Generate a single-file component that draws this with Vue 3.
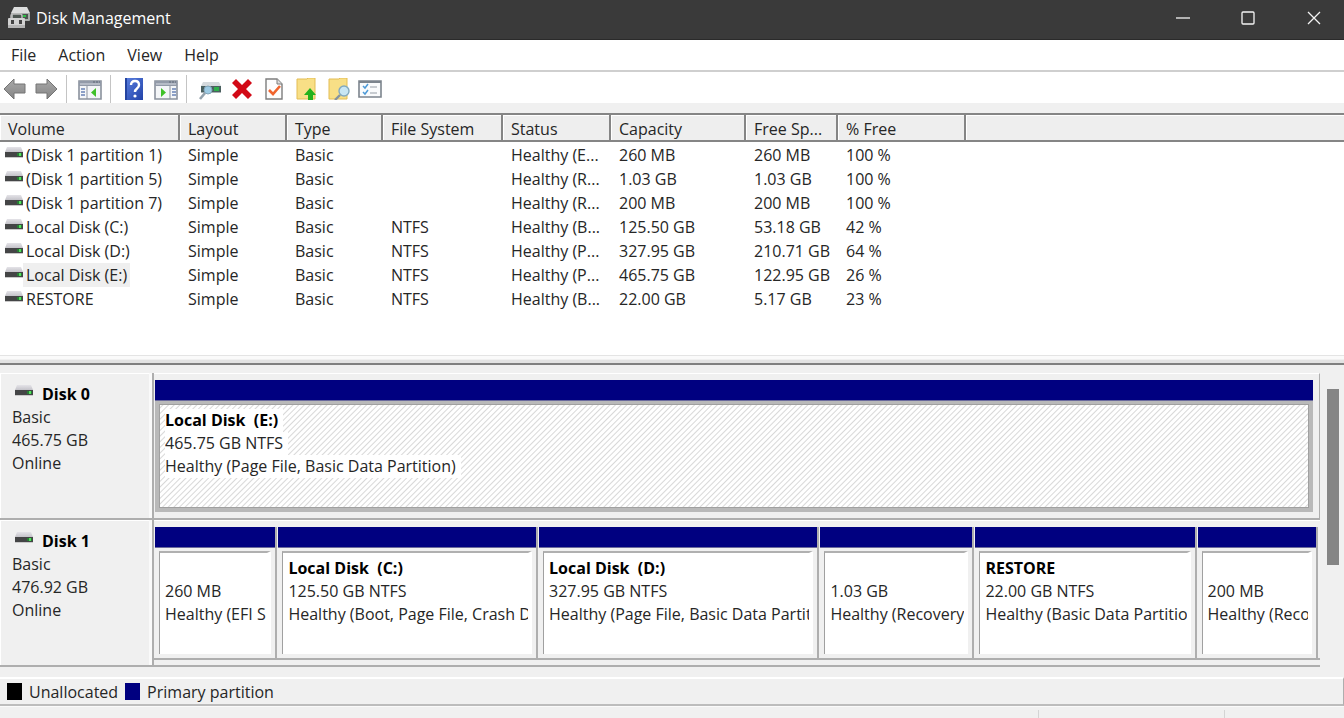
<script setup>
import { ref } from 'vue'

const menus = ['File', 'Action', 'View', 'Help']

const columns = [
  { key: 'name', label: 'Volume', width: 180 },
  { key: 'layout', label: 'Layout', width: 107 },
  { key: 'type', label: 'Type', width: 96 },
  { key: 'fs', label: 'File System', width: 120 },
  { key: 'status', label: 'Status', width: 108 },
  { key: 'capacity', label: 'Capacity', width: 135 },
  { key: 'free', label: 'Free Sp...', width: 92 },
  { key: 'percent', label: '% Free', width: 128 }
]

const volumes = [
  { name: '(Disk 1 partition 1)', fs: '', status: 'Healthy (E...', capacity: '260 MB', free: '260 MB', percent: '100 %' },
  { name: '(Disk 1 partition 5)', fs: '', status: 'Healthy (R...', capacity: '1.03 GB', free: '1.03 GB', percent: '100 %' },
  { name: '(Disk 1 partition 7)', fs: '', status: 'Healthy (R...', capacity: '200 MB', free: '200 MB', percent: '100 %' },
  { name: 'Local Disk (C:)', fs: 'NTFS', status: 'Healthy (B...', capacity: '125.50 GB', free: '53.18 GB', percent: '42 %' },
  { name: 'Local Disk (D:)', fs: 'NTFS', status: 'Healthy (P...', capacity: '327.95 GB', free: '210.71 GB', percent: '64 %' },
  { name: 'Local Disk (E:)', fs: 'NTFS', status: 'Healthy (P...', capacity: '465.75 GB', free: '122.95 GB', percent: '26 %' },
  { name: 'RESTORE', fs: 'NTFS', status: 'Healthy (B...', capacity: '22.00 GB', free: '5.17 GB', percent: '23 %' }
].map((v) => ({ layout: 'Simple', type: 'Basic', ...v }))

const selected = ref('Local Disk (E:)')

// weight: relative width of the partition in the graph
const disks = [
  {
    name: 'Disk 0',
    size: '465.75 GB',
    parts: [
      { id: 'e', label: 'Local Disk  (E:)', size: '465.75 GB NTFS', status: 'Healthy (Page File, Basic Data Partition)', weight: 1, active: true }
    ]
  },
  {
    name: 'Disk 1',
    size: '476.92 GB',
    parts: [
      { id: 'p1', label: '', size: '260 MB', status: 'Healthy (EFI S', weight: 122 },
      { id: 'c', label: 'Local Disk  (C:)', size: '125.50 GB NTFS', status: 'Healthy (Boot, Page File, Crash D', weight: 261 },
      { id: 'd', label: 'Local Disk  (D:)', size: '327.95 GB NTFS', status: 'Healthy (Page File, Basic Data Partit', weight: 282 },
      { id: 'p5', label: '', size: '1.03 GB', status: 'Healthy (Recovery', weight: 154 },
      { id: 'r', label: 'RESTORE', size: '22.00 GB NTFS', status: 'Healthy (Basic Data Partitio', weight: 222 },
      { id: 'p7', label: '', size: '200 MB', status: 'Healthy (Reco', weight: 120 }
    ]
  }
]
</script>

<template>
  <div class="window">
    <svg class="defs" aria-hidden="true">
      <defs>
        <linearGradient id="metal" x1="0" y1="0" x2="0" y2="1">
          <stop offset="0" stop-color="#e4e3e8" />
          <stop offset="1" stop-color="#c4c3c9" />
        </linearGradient>
        <linearGradient id="arrow" x1="0" y1="0" x2="0" y2="1">
          <stop offset="0" stop-color="#a9a9a9" />
          <stop offset="1" stop-color="#858585" />
        </linearGradient>
        <linearGradient id="book" x1="0" y1="0" x2="1" y2="1">
          <stop offset="0" stop-color="#5b80e0" />
          <stop offset="1" stop-color="#2142a8" />
        </linearGradient>
        <symbol id="drive" viewBox="0 0 18 12">
          <path d="M2 0h14l2 5H0z" fill="url(#metal)" />
          <path d="M0 5h18v5H0z" fill="#444546" />
          <path d="M0 10h18v1H0z" fill="#c9c9c9" />
          <path d="M12 6h5v3h-5z" fill="#287a35" />
          <path d="M14 6h2v3h-2z" fill="#52e05b" />
        </symbol>
        <symbol id="pane" viewBox="0 0 24 20">
          <path d="M1 1h22v18H1z" fill="#f4f6f8" stroke="#8b929d" stroke-width="1.6" />
          <path d="M1 1h22v5H1z" fill="#929aa8" />
          <path d="M2 4h20" stroke="#c5cad3" stroke-width="1.4" />
          <path d="M15 2h2M18 2h2M21 2h1" stroke="#5d6675" stroke-width="1.2" />
        </symbol>
      </defs>
    </svg>

    <header class="titlebar">
      <svg class="app-icon" viewBox="0 0 24 22" aria-hidden="true">
        <path d="M7 0h13l3 6H4z" fill="#dcdddd" />
        <path d="M4 6h19v7q0 1-1 1H4z" fill="#a9adab" />
        <path d="M6 7h15v5H6z" fill="#4c5550" />
        <path d="M16 8h3v2h-3z" fill="#2fc047" />
        <path d="M4 11V9q0-2 2-2h7q2 0 2 2v2" fill="none" stroke="#bdbdbd" stroke-width="1.500" />
        <rect x="1" y="11" width="17" height="10" rx="1" fill="#d2d2d2" />
        <path d="M1 18h17v2q0 1-1 1H2q-1 0-1-1z" fill="#b4b4b4" />
        <path d="M4 13h3v4H4zM12 13h3v4h-3z" fill="#444" />
      </svg>
      <h1>Disk Management</h1>
      <div class="window-buttons">
        <button type="button" aria-label="Minimize">
          <svg viewBox="0 0 16 16"><path d="M1 8h14" /></svg>
        </button>
        <button type="button" aria-label="Maximize">
          <svg viewBox="0 0 16 16"><rect x="2" y="2" width="12" height="12" rx="1" /></svg>
        </button>
        <button type="button" aria-label="Close">
          <svg viewBox="0 0 16 16"><path d="M2 2l12 12M14 2L2 14" /></svg>
        </button>
      </div>
    </header>

    <nav class="menubar">
      <button v-for="m in menus" :key="m" type="button">{{ m }}</button>
    </nav>

    <div class="toolbar" role="toolbar">
      <button type="button" aria-label="Back">
        <svg viewBox="0 0 24 22"><path d="M2 11L12 1v5h11v9H12v6z" fill="url(#arrow)" stroke="#747474" /></svg>
      </button>
      <button type="button" aria-label="Forward">
        <svg viewBox="0 0 24 22"><path d="M23 11L13 1v5H2v9h11v6z" fill="url(#arrow)" stroke="#747474" /></svg>
      </button>
      <span class="divider"></span>
      <button type="button" class="wide" aria-label="Show or hide console tree">
        <svg viewBox="0 0 24 22">
          <use href="#pane" y="2" width="24" height="20" />
          <path d="M9 8v13" stroke="#8b929d" />
          <path d="M3 11h4M3 14h4M3 17h4" stroke="#6882b5" stroke-width="1.4" />
          <path d="M18 10v9l-5-4.500z" fill="#3fc129" />
        </svg>
      </button>
      <span class="divider"></span>
      <button type="button" class="wide" aria-label="Help">
        <svg viewBox="0 0 24 22">
          <path d="M3 0h18v22H3z" fill="url(#book)" />
          <path d="M3 0h2v22H3z" fill="#2444a0" />
          <path d="M9 7q0-4 4-4t4 4q0 2-2 3.500T13 14" fill="none" stroke="#fff" stroke-width="2.400" />
          <circle cx="13" cy="18" r="1.600" fill="#fff" />
        </svg>
      </button>
      <button type="button" aria-label="Show or hide action pane">
        <svg viewBox="0 0 24 22">
          <use href="#pane" y="2" width="24" height="20" />
          <path d="M16 8v13" stroke="#8b929d" />
          <path d="M18 11h4M18 14h4M18 17h4" stroke="#6882b5" stroke-width="1.4" />
          <path d="M7 10v9l5-4.500z" fill="#3fc129" />
        </svg>
      </button>
      <span class="divider"></span>
      <button type="button" class="wide" aria-label="Connect drive">
        <svg viewBox="0 0 24 22">
          <path d="M5 4h16l2 4H3z" fill="#d5dadd" />
          <path d="M3 8h20v6H3z" fill="#4a605f" />
          <path d="M16 9h5v4h-5z" fill="#2eae4b" />
          <path d="M3 14h20v1H3z" fill="#a9b1b4" />
          <circle cx="10" cy="12" r="4" fill="#9dcbe4" stroke="#82a4b8" />
          <path d="M7 15l-5 6" stroke="#94a2ac" stroke-width="2.600" />
        </svg>
      </button>
      <button type="button" aria-label="Delete">
        <svg viewBox="0 0 24 22"><path d="M2 5l4-4 6 6 6-6 4 4-6 6 6 6-4 4-6-6-6 6-4-4 6-6z" fill="#d20a17" /></svg>
      </button>
      <button type="button" aria-label="Properties">
        <svg viewBox="0 0 24 22">
          <path d="M4 1h11l5 5v15H4z" fill="#fdfdfd" stroke="#7d7d7d" stroke-width="1.400" />
          <path d="M15 1v5h5" fill="#ddd" stroke="#7d7d7d" />
          <path d="M7 12l4 4 7-8" fill="none" stroke="#f0642d" stroke-width="2.600" />
        </svg>
      </button>
      <button type="button" aria-label="Up one level">
        <svg viewBox="0 0 24 22">
          <path d="M3 1h10l1-1h7v21H3z" fill="#f8df86" stroke="#e3bd55" />
          <path d="M16 10l6 7h-3v5h-5v-5h-4z" fill="#25b21c" />
        </svg>
      </button>
      <button type="button" aria-label="Find">
        <svg viewBox="0 0 24 22">
          <path d="M3 1h10l1-1h7v21H3z" fill="#f8df86" stroke="#e3bd55" />
          <circle cx="18" cy="13" r="5" fill="#c8e6f4" stroke="#82a9bf" stroke-width="1.400" />
          <path d="M14 17l-5 5" stroke="#8493a0" stroke-width="2.400" />
        </svg>
      </button>
      <button type="button" aria-label="Options">
        <svg viewBox="0 0 24 22">
          <path d="M1 3h22v16H1z" fill="#fafbfc" stroke="#7c848d" stroke-width="1.600" />
          <path d="M1 4h22" stroke="#7c848d" stroke-width="2" />
          <path d="M5 8l2 2 3-4M5 14l2 2 3-4" fill="none" stroke="#4d9ad7" stroke-width="1.500" />
          <path d="M12 9h7M12 15h7" stroke="#b8bdc2" stroke-width="1.400" />
        </svg>
      </button>
    </div>

    <section class="volume-list">
      <table>
        <colgroup>
          <col v-for="c in columns" :key="c.key" :style="{ width: c.width + 'px' }" />
          <col />
        </colgroup>
        <thead>
          <tr>
            <th v-for="c in columns" :key="c.key" scope="col">{{ c.label }}</th>
            <th></th>
          </tr>
        </thead>
        <tbody>
          <tr v-for="v in volumes" :key="v.name" @click="selected = v.name">
            <td v-for="c in columns" :key="c.key" :class="c.key">
              <template v-if="c.key === 'name'">
                <svg class="drive"><use href="#drive" /></svg>
                <span class="volume-name" :class="{ selected: v.name === selected }">{{ v.name }}</span>
              </template>
              <template v-else>{{ v[c.key] }}</template>
            </td>
            <td></td>
          </tr>
        </tbody>
      </table>
    </section>

    <div class="splitter"></div>

    <section class="graph">
      <div class="disks">
        <div v-for="d in disks" :key="d.name" class="disk">
          <div class="disk-info">
            <h2><svg class="drive"><use href="#drive" /></svg>{{ d.name }}</h2>
            <p>Basic</p>
            <p>{{ d.size }}</p>
            <p>Online</p>
          </div>
          <div class="partitions" :class="{ single: d.parts.length === 1 }">
            <div
              v-for="p in d.parts"
              :key="p.id"
              class="partition"
              :class="{ active: p.active }"
              :style="{ flexGrow: p.weight }"
            >
              <div class="stripe"></div>
              <div class="frame">
                <div class="body">
                  <p class="label"><span>{{ p.label }}</span></p>
                  <p><span>{{ p.size }}</span></p>
                  <p><span>{{ p.status }}</span></p>
                </div>
              </div>
            </div>
          </div>
        </div>
      </div>
      <div class="scrollbar"><div class="thumb"></div></div>
    </section>

    <div class="legend">
      <span class="swatch black"></span><span>Unallocated</span>
      <span class="swatch navy"></span><span>Primary partition</span>
    </div>

    <footer class="statusbar">
      <span></span>
      <span></span>
      <span></span>
    </footer>
  </div>
</template>

<style>
body {
  margin: 0;
  background: #f0f0f0;
}
</style>

<style scoped>
* {
  box-sizing: border-box;
}

.window {
  display: flex;
  flex-direction: column;
  min-height: 100vh;
  background: #f0f0f0;
  color: #262626;
  font-family: "Open Sans", "Noto Sans", sans-serif;
  font-size: 16px;
  line-height: 24px;
}

.defs {
  position: absolute;
  width: 0;
  height: 0;
}

button {
  border: none;
  background: none;
  padding: 0;
  color: inherit;
  font: inherit;
}

h1,
h2,
p {
  margin: 0;
}

/* title bar */
.titlebar {
  display: flex;
  align-items: center;
  height: 40px;
  padding: 0 0 4px 7px;
  background: #3a3a3a;
  border-bottom: 1px solid #2a2a2a;
  color: #fff;
}

.app-icon {
  width: 24px;
  height: 22px;
}

h1 {
  flex: 1;
  margin-left: 5px;
  font-size: 16px;
  font-weight: 400;
}

.window-buttons {
  display: flex;
}

.window-buttons button {
  display: flex;
  align-items: center;
  justify-content: center;
  width: 65px;
  height: 36px;
}

.window-buttons button:last-child {
  width: 61px;
  margin-left: 3px;
}

.window-buttons svg {
  width: 16px;
  height: 16px;
  fill: none;
  stroke: #f4f4f4;
  stroke-width: 1.3;
}

/* menu and toolbar */
.menubar {
  display: flex;
  gap: 22px;
  padding: 3px 11px;
  background: #fff;
  border-bottom: 2px solid #cfcfcf;
}

.toolbar {
  display: flex;
  align-items: center;
  gap: 8px;
  height: 31px;
  padding: 2px 2px 0;
  background: #fff;
}

.toolbar svg {
  display: block;
  width: 24px;
  height: 22px;
}

.toolbar .wide {
  margin-left: 3px;
}

.divider {
  width: 1px;
  height: 28px;
  background: #c4c4c4;
}

/* volume list */
.volume-list {
  margin-top: 10px;
  padding-bottom: 44px;
  background: #fff;
  border-top: 2px solid #858585;
}

table {
  width: 100%;
  table-layout: fixed;
  border-collapse: separate;
  border-spacing: 0;
}

th {
  height: 27px;
  padding: 3px 0 0 8px;
  border-right: 2px solid #858585;
  border-bottom: 2px solid #858585;
  background: #eee;
  box-shadow: inset 1px 1px #fff;
  font-weight: 400;
  line-height: 22px;
  text-align: left;
  white-space: nowrap;
}

th:last-child {
  border-right: none;
}

td {
  height: 24px;
  padding: 0 0 0 8px;
  white-space: nowrap;
}

tbody tr:first-child td {
  height: 25px;
  padding-top: 1px;
}

td.name {
  padding-left: 5px;
}

.drive {
  width: 18px;
  height: 12px;
}

td .drive {
  margin-bottom: 2px;
}

.volume-name {
  display: inline-block;
  padding: 0 3px;
}

.volume-name.selected {
  background: #efefef;
}

.splitter {
  height: 10px;
  border-top: 1px solid #e4e4e4;
  border-bottom: 2px solid #808080;
  box-shadow: inset 0 -3px #e3e3e3, inset 0 3px #fafafa;
}

/* graphical view */
.graph {
  display: flex;
  padding-top: 8px;
}

.disks {
  flex: 1;
  min-width: 0;
}

.disk {
  display: flex;
  border-bottom: 2px solid #aeaeae;
  height: 147px;
}

.disk-info {
  width: 154px;
  padding: 10px 0 0 11px;
  border-left: 1px solid #fff;
  border-right: 2px solid #aeaeae;
  box-shadow: inset -3px 0 #fafafa, inset 0 1px #fff;
  line-height: 23px;
}

.disk-info h2 {
  display: flex;
  gap: 9px;
  padding-left: 3px;
  color: #000;
  font-size: 16px;
  font-weight: 700;
}

.disk-info .drive {
  margin-top: 2px;
}

.partitions {
  display: flex;
  flex: 1;
  min-width: 0;
  margin-bottom: 5px;
  padding: 6px 2px 0 1px;
  border-top: 1px solid #fff;
  border-bottom: 2px solid #aeaeae;
}

.partitions.single {
  margin-bottom: 0;
  padding-right: 6px;
  padding-bottom: 6px;
  border-bottom: none;
  border-right: 1px solid #aeaeae;
}

.partition {
  display: flex;
  flex: 1 1 0;
  flex-direction: column;
  min-width: 0;
  border-right: 2px solid #aeaeae;
  margin-right: 1px;
}

.partition:last-child {
  margin-right: 0;
}

.partition.active {
  border-right: none;
}

.stripe {
  height: 21px;
  background: #000080;
  border-bottom: 1px solid #6a6a9c;
}

.frame {
  flex: 1;
  min-height: 0;
  padding: 3px 4px 4px 4px;
}

.body {
  height: 100%;
  padding: 4px 0 0 5px;
  overflow: hidden;
  background: #fff;
  border-top: 2px solid #b0b0b0;
  border-left: 1px solid #a0a0a0;
  border-right: 4px solid #fff;
  line-height: 23px;
  white-space: pre;
}

.body p {
  height: 23px;
  overflow: hidden;
}

.label {
  color: #000;
  font-weight: 700;
}

.active .frame {
  background: #b9b9b9;
}

.active .body {
  background: repeating-linear-gradient(135deg, #fff 0, #fff 1px, #d8d8d8 2px, #fff 3px, #fff 4px);
  border-top: 1px solid #a0a0a0;
  border-right: 1px solid #a0a0a0;
  border-bottom: 1px solid #a0a0a0;
}

.active .body span {
  display: inline-block;
  padding-right: 5px;
  background: #fff;
}

.scrollbar {
  width: 24px;
  padding: 16px 5px 0 7px;
}

.thumb {
  height: 176px;
  background: #858585;
}

/* legend and status bar */
.legend {
  display: flex;
  align-items: center;
  gap: 7px;
  height: 29px;
  margin-top: 10px;
  padding-left: 7px;
  border-top: 2px solid #fff;
  border-right: 1px solid #aeaeae;
  border-bottom: 2px solid #bcbcbc;
}

.swatch {
  width: 15px;
  height: 17px;
}

.swatch.black {
  background: #000;
}

.swatch.navy {
  background: #000080;
}

.statusbar {
  display: flex;
  flex: 1;
  min-height: 10px;
  padding-top: 3px;
  border-top: 1px solid #fafafa;
}

.statusbar span {
  width: 119px;
}

.statusbar span:first-child {
  flex: 1;
}

.statusbar span:nth-child(2) {
  width: 187px;
  border-left: 1px solid #d4d4d4;
  border-right: 1px solid #d4d4d4;
}
</style>
